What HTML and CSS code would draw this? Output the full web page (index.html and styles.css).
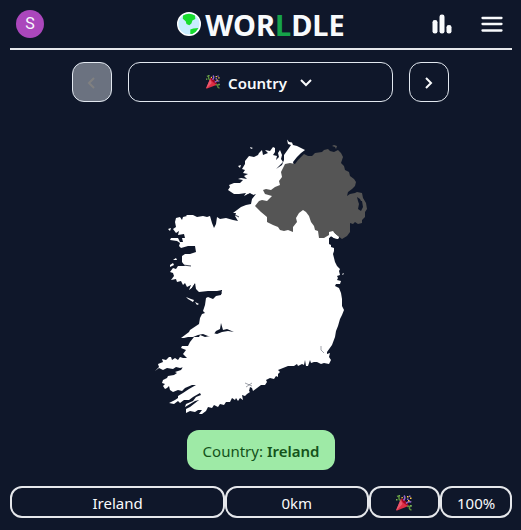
FILE: index.html
```html
<!DOCTYPE html>
<html lang="en">
<head>
<meta charset="utf-8">
<meta name="viewport" content="width=device-width, initial-scale=1">
<title>Worldle</title>
<link rel="stylesheet" href="styles.css">
</head>
<body>
<svg class="defs" aria-hidden="true">
  <symbol id="popper" viewBox="0 0 16 16">
    <path fill="#dd2e44" d="M5 3.500 0.400 14.600q-.3 1 .8.8L12.600 11Q10.500 5.500 5 3.500z"/>
    <path fill="#ea596e" d="M4.600 4.500.4 14.600q-.2.6.2.8L6.500 9z"/>
    <path fill="#a0041e" d="M5 3.500q1 4.500 7.600 7.500Q12.500 9 9.500 6T5 3.500z"/>
    <path fill="none" stroke="#9266cc" stroke-width="1.500" d="M7.500 5.500Q10 3 8 .6M10 8.500q2-2.500 5.300-1.500"/>
    <path fill="none" stroke="#5c913b" stroke-width="1.500" d="M1 1.500q2-1 2 1.500t1.500 2M11 11.500q3-1 2.500 1t2 2.500"/>
    <path fill="#77b255" d="M14 10h1.800v1.800H14zM2.500 0h1.600v1.500H2.500zM0 4h1.500v1.500H0z"/>
    <path fill="#ffcc4d" d="M11 1h1.500v1.500H11zM14 2.500h1.500V4H14zM12 5h1.500v1.500H12zM5.500 2h1.300v1.300H5.500z"/>
    <path fill="#9266cc" d="M13 .5h1.500V2H13zM11 3.500h1.500V5H11z"/>
  </symbol>
</svg>
<div class="page">
  <header class="header">
    <button class="avatar" aria-label="Account">S</button>
    <h1 class="logo">
      <svg class="globe" viewBox="0 0 24 24" aria-hidden="true">
        <circle cx="12" cy="12" r="11.300" fill="#c8edff" stroke="#fff" stroke-width="1.400"/>
        <path fill="#17dc2d" d="M6 3.500Q12 .2 18 3.500l.3 3.500-2.900 1.500-1 3-2.100 1.800-2.800-1.300-.8-2.800-2.900-2.400zM13.300 17.500l3-1 5.200-.6q-2 4-6.200 6.200l-2-.2z"/>
      </svg>
      <span>WOR<span class="accent">L</span>DLE</span>
    </h1>
    <div class="tools">
      <button class="tool" aria-label="Statistics">
        <svg viewBox="0 0 24 24" fill="currentColor" aria-hidden="true"><rect x="1.500" y="8" width="5" height="13.500" rx="2.300"/><rect x="8.500" y="2.500" width="5" height="19" rx="2.300"/><rect x="15.500" y="13" width="5" height="8.500" rx="2.300"/></svg>
      </button>
      <button class="tool" aria-label="Menu">
        <svg viewBox="0 0 24 24" fill="none" stroke="currentColor" stroke-width="2.300" stroke-linecap="round" aria-hidden="true"><path d="M1.500 6h19M1.500 12h19M1.500 18.500h19"/></svg>
      </button>
    </div>
  </header>
  <nav class="rounds">
    <button class="step" disabled aria-label="Previous round"><svg viewBox="0 0 16 16" aria-hidden="true"><path d="M10 4 5 9l5 5"/></svg></button>
    <button class="picker"><svg class="popper" aria-hidden="true"><use href="#popper"/></svg><span>Country</span><svg class="caret" viewBox="0 0 16 16" aria-hidden="true"><path d="m2 6 5 5 5-5"/></svg></button>
    <button class="step" aria-label="Next round"><svg viewBox="0 0 16 16" aria-hidden="true"><path d="m5 4 5 5-5 5"/></svg></button>
  </nav>
  <main>
    <svg class="map" viewBox="151 113 221 308" role="img" aria-label="Map outline">
      <path fill="#fff" d="M287 140.500L289 143 292 143.500 293 146 297 147 305 151 301 154 297 158 293 163 300 190 330 215 330 232 334 232 336 235 339 238 338 240 334 239 331 237 329 239 329 245 331 246 331 248 334 249 334 252 333 255 335 263 337 267 340 270 339 272 340 276 337 277 338 279 337 281 341 282 340 285 336 285 335 287 339 289 341 294 342 300 342 307 344 311 342 316 340 320 338 327 336 332 335 338 332 346 327 353 327 355 330 354 329 358 331 361 329 365 324 364 321 365 317 363 314 363 311 364 310 361 308 367 306 367 305 361 304 366 302 365 298 367 297 365 294 367 288 367 283 369 278 371 280 373 278 375 278 378 276 377 274 380 270 379 266 381 267 383 265 386 261 386 257 389 253 392 252 389 250 388 249 392 250 393 247 395 245 397 242 396 243 401 240 399 238 402 236 399 235 401 232 399 230 403 226 403 224 406 220 405 218 408 214 406 212 409 208 408 206 412 202 415 199 415 202 411 198 411 195 413 190 412 186 414 186 410 190 408 199 401 195 402 185 408 186 405 193 402 196 398 201 396 200 394 193 398 189 401 184 401 180 404 178 402 174 405 169 404 175 401 178 399 178 397 183 394 189 390 196 386 192 386 185 389 182 392 178 391 173 393 170 391 169 387 167 389 165 390 163 387 165 385 162 384 163 381 167 379 168 377 174 376 177 374 175 373 181 371 183 368 188 367 180 369 176 368 173 370 167 369 163 371 159 369 155 372 159 368 158 365 163 363 162 360 166 361 169 358 171 358 172 361 175 359 178 361 180 358 183 359 187 359 183 355 186 351 181 349 182 347 188 347 190 343 194 338 199 338 200 336 205 338 210 337 213 334 217 335 222 333 228 332 234 333 227 330 223 331 221 324 220 330 216 332 214 335 208 337 203 335 198 336 193 338 188 338 184 339 181 339 185 336 189 333 190 331 196 327 199 325 200 319 202 315 205 314 203 312 205 306 206 299 208 298 213 300 216 297 221 296 222 291 217 292 208 292 199 293 196 290 195 284 192 289 189 291 191 286 187 288 185 284 183 286 181 282 177 283 176 280 171 281 174 277 173 274 170 273 173 269 176 270 178 267 185 267 182 263 182 257 185 255 190 255 196 253 195 247 188 247 181 249 179 247 180 244 177 242 170 241 171 239 178 239 180 243 183 243 182 239 185 239 184 235 178 236 179 232 176 234 173 230 176 228 175 223 176 219 180 218 182 221 183 218 187 217 186 216 193 216 197 218 203 217 207 218 210 217 212 224 214 229 216 225 217 218 220 220 226 219 233 221 238 222 235 217 236 214 233 214 241 208 246 206 251 205 252 200 256 195 253 196 250 194 244 197 246 194 239 195 234 195 231 193 228 191 230 188 229 186 234 184 240 184 243 181 238 180 241 179 247 180 244 177 248 175 243 174 245 171 242 170 245 165 245 162 249 157 254 158 258 156 259 154 262 151 263 156 268 154 265 151 270 152 273 148 275 149 275 153 273 156 277 157 276 161 279 158 278 154 280 151 282 156 281 160 283 163 276 170 282 166 284 161 284 156 289 149 291 146 288 145z"/>
      <path fill="#fff" d="M186 298l5 2 3 1-1 2-5-3zM195 303l4 2-2 1zM170 266l3-2 1 2-4 2zM173 261l3-2 1 2zM168 230l3-1-1 3zM238 167l3-1-1 3zM250 148l3 1-2 1zM343 274l1 1-2 1z"/>
      <path fill="#555" d="M304 155l4 2 4 0 3-3 7-1 2-2 4-1 2 2 4 1 4-2 3 3 2 4-2 6 3 3 1 4 4 2 1 4 4 3 2 3-1 4-3 3-4 3-1 4 3-2 5-1 2-1 5 1 1 5 3 5 1 6-2 3 0 5-3 3 0 3-4 1-3-2-2 2-3-1 0 4 0 5-3 4-5 3-4-3-4-3-5 2-5 3-5 0-1-7-3-1-1-4-3-4-2-6-3-4-3-2-4 3-3 5 1 4-4 5 0 5-5-2-4 1-4-1-2-3-5-2-6-3 0-5-6-5-6-6 4-5 3-1 5 1 5-5-7-2-2-4 3-1 5 1 4-3 5-2-1-4 3-4-1-5 4-8 5-1 5 1 3-4zM332 147l2-1 3 1-1 3-1-2z"/>
      <path fill="#fff" d="M329 233l4-1 2 3 4 3-1 2-4-1-3-2-2 2z"/>
      <path fill="#0f172a" d="M357 198l3 2 1 2 1 0 1 6-2 4-3-2 1-5-1-3z"/>
      <path fill="none" stroke="#0f172a" stroke-width=".8" d="M183 266l8 1M190 292l5-7M215 295l7-1M219 294l3-3M235 216l4 2M247 196l6 0"/>
      <path fill="none" stroke="#0f172a" stroke-width=".4" d="M245 384l7 3M246 388l6-4M321 347l0 4 3 3"/>
    </svg>
    <p class="answer">Country: <strong>Ireland</strong></p>
    <div class="guess">
      <div>Ireland</div><div>0km</div><div><svg class="popper result" aria-label="Correct" role="img"><use href="#popper"/></svg></div><div>100%</div>
    </div>
  </main>
</div>
</body>
</html>
```
FILE: styles.css
```css
* { box-sizing: border-box; }
body {
  margin: 0;
  background: #0f172a;
  color: #f8fafc;
  font: 15px/24px "Noto Sans", "Open Sans", sans-serif;
}
button {
  padding: 0;
  border: 0;
  background: none;
  color: inherit;
  font: inherit;
}
.defs { position: absolute; width: 0; height: 0; }
.page { padding: 0 9px 12px 10px; }
.header {
  display: grid;
  grid-template-columns: 1fr auto 1fr;
  align-items: center;
  height: 50px;
  border-bottom: 2px solid #e5e7eb;
}
.avatar {
  width: 28px;
  height: 28px;
  margin-left: 6px;
  border-radius: 50%;
  background: #ab47bc;
  font: 16px/28px Roboto, sans-serif;
}
.logo {
  display: flex;
  align-items: center;
  gap: 4px;
  margin: 0;
  font: 700 29px/46px "Noto Sans", "Open Sans", sans-serif;
}
.logo > span { padding-top: 2px; }
.globe { width: 24px; height: 24px; }
.accent { color: #16a34a; }
.tools {
  display: flex;
  justify-content: flex-end;
  gap: 26px;
  padding-right: 7px;
}
.tool, .tool svg { display: block; width: 24px; height: 24px; }
.rounds {
  display: flex;
  justify-content: center;
  gap: 16px;
  margin: 12px 63px 0 62px;
}
.step, .picker {
  display: flex;
  align-items: center;
  justify-content: center;
  height: 40px;
  border: 1px solid #e2e8f0;
  border-radius: 12px;
}
.step { flex: 0 0 40px; }
.step:disabled { background: #6b7280; color: #808080; }
.picker { flex: 1; gap: 8px; font-weight: 600; }
.picker span { padding-top: 2px; }
.step svg, .caret {
  width: 16px;
  height: 16px;
  fill: none;
  stroke: currentColor;
  stroke-width: 2;
}
.caret { margin-left: 4px; }
.popper { width: 14px; height: 14px; }
.popper.result { width: 16px; height: 16px; }
.map {
  display: block;
  width: 44%;
  min-width: 221px;
  margin: 10px auto;
}
.answer {
  width: fit-content;
  margin: 0 auto 16px;
  padding: 11px 16px 9px;
  height: 40px;
  line-height: 20px;
  border-radius: 12px;
  background: #9eeaa6;
  color: #14531a;
}
.answer strong { font-weight: 600; }
.guess {
  display: grid;
  grid-template-columns: 3fr 2fr 1fr 1fr;
}
.guess div {
  display: flex;
  align-items: center;
  justify-content: center;
  height: 32px;
  padding-top: 2px;
  border: 2px solid #e5e7eb;
  border-radius: 12px;
}
```
